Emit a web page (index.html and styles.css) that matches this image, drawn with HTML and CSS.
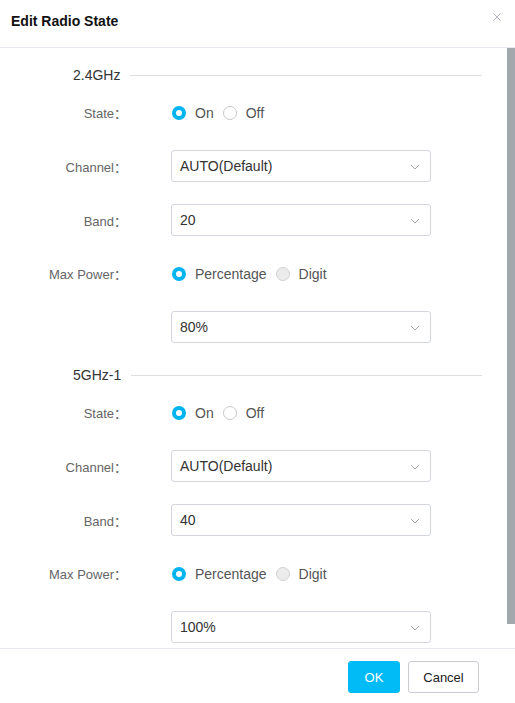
FILE: index.html
```html
<!DOCTYPE html>
<html>
<head>
<meta charset="utf-8">
<link rel="stylesheet" href="styles.css">
</head>
<body>
<div class="dialog">
  <div class="dlg-header">
    <span class="dlg-title">Edit Radio State</span>
    <svg class="close" width="8" height="8" viewBox="0 0 8 8"><path d="M0.5 0.5L7.5 7.5M7.5 0.5L0.5 7.5" stroke="#b4b8c4" stroke-width="1"/></svg>
  </div>
  <div class="dlg-body">
    <div class="content">
      <div class="section"><span class="sec-title">2.4GHz</span><span class="sec-line"></span></div>
      <div class="item radio-item">
        <label class="lbl">State：</label>
        <div class="ctrl">
          <span class="radio checked"></span><span class="rtext">On</span>
          <span class="radio"></span><span class="rtext">Off</span>
        </div>
      </div>
      <div class="item">
        <label class="lbl">Channel：</label>
        <div class="ctrl"><div class="select"><span>AUTO(Default)</span><svg width="10" height="6" viewBox="0 0 10 6"><polyline points="1,1 5,5 9,1" fill="none" stroke="#a8a8b0" stroke-width="1"/></svg></div></div>
      </div>
      <div class="item">
        <label class="lbl">Band：</label>
        <div class="ctrl"><div class="select"><span>20</span><svg width="10" height="6" viewBox="0 0 10 6"><polyline points="1,1 5,5 9,1" fill="none" stroke="#a8a8b0" stroke-width="1"/></svg></div></div>
      </div>
      <div class="item radio-item">
        <label class="lbl">Max Power：</label>
        <div class="ctrl">
          <span class="radio checked"></span><span class="rtext">Percentage</span>
          <span class="radio disabled"></span><span class="rtext">Digit</span>
        </div>
      </div>
      <div class="item">
        <label class="lbl"></label>
        <div class="ctrl"><div class="select"><span>80%</span><svg width="10" height="6" viewBox="0 0 10 6"><polyline points="1,1 5,5 9,1" fill="none" stroke="#a8a8b0" stroke-width="1"/></svg></div></div>
      </div>

      <div class="section"><span class="sec-title">5GHz-1</span><span class="sec-line"></span></div>
      <div class="item radio-item">
        <label class="lbl">State：</label>
        <div class="ctrl">
          <span class="radio checked"></span><span class="rtext">On</span>
          <span class="radio"></span><span class="rtext">Off</span>
        </div>
      </div>
      <div class="item">
        <label class="lbl">Channel：</label>
        <div class="ctrl"><div class="select"><span>AUTO(Default)</span><svg width="10" height="6" viewBox="0 0 10 6"><polyline points="1,1 5,5 9,1" fill="none" stroke="#a8a8b0" stroke-width="1"/></svg></div></div>
      </div>
      <div class="item">
        <label class="lbl">Band：</label>
        <div class="ctrl"><div class="select"><span>40</span><svg width="10" height="6" viewBox="0 0 10 6"><polyline points="1,1 5,5 9,1" fill="none" stroke="#a8a8b0" stroke-width="1"/></svg></div></div>
      </div>
      <div class="item radio-item">
        <label class="lbl">Max Power：</label>
        <div class="ctrl">
          <span class="radio checked"></span><span class="rtext">Percentage</span>
          <span class="radio disabled"></span><span class="rtext">Digit</span>
        </div>
      </div>
      <div class="item">
        <label class="lbl"></label>
        <div class="ctrl"><div class="select"><span>100%</span><svg width="10" height="6" viewBox="0 0 10 6"><polyline points="1,1 5,5 9,1" fill="none" stroke="#a8a8b0" stroke-width="1"/></svg></div></div>
      </div>
    </div>
    <div class="scroll-thumb"></div>
  </div>
  <div class="dlg-footer">
    <button class="btn btn-ok">OK</button>
    <button class="btn btn-cancel">Cancel</button>
  </div>
</div>
</body>
</html>
```
FILE: styles.css
```css
html, body {
  margin: 0;
  padding: 0;
  background: #fff;
}
body {
  font-family: "Liberation Sans", Arial, "Noto Sans CJK SC", sans-serif;
  color: #333;
}
.dialog {
  width: 515px;
  height: 703px;
  display: flex;
  flex-direction: column;
}
.dlg-header {
  height: 47px;
  border-bottom: 1px solid #e9e9f1;
  display: flex;
  align-items: center;
  justify-content: space-between;
  padding: 0 14px 0 11px;
  position: relative;
}
.dlg-title {
  font-size: 14px;
  font-weight: bold;
  color: #111;
  margin-top: -5px;
}
.close {
  position: absolute;
  left: 493px;
  top: 13px;
}
.dlg-body {
  height: 600px;
  overflow: hidden;
  position: relative;
  padding-right: 8px;
}
.scroll-thumb {
  position: absolute;
  right: 0;
  top: -1px;
  width: 8px;
  height: 577px;
  background: #a2a8ae;
}
.content {
  padding: 17px 0 8px 0;
}
.section {
  display: flex;
  align-items: center;
  height: 20px;
  padding-left: 73px;
  padding-right: 25px;
  margin-bottom: 12px;
}
.sec-title {
  font-size: 14px;
  color: #333;
}
.sec-line {
  flex: 1;
  height: 1px;
  background: #dedede;
  margin-left: 10px;
}
.item {
  display: flex;
  align-items: center;
  height: 32px;
  margin-bottom: 22px;
}
.radio-item {
  height: 31px;
}
.lbl {
  width: 127px;
  text-align: right;
  font-size: 13px;
  color: #666;
  flex: none;
}
.ctrl {
  margin-left: 44px;
  display: flex;
  align-items: center;
  font-size: 14px;
}
.radio {
  width: 14px;
  height: 14px;
  box-sizing: border-box;
  border-radius: 50%;
  border: 1px solid #c9c9c9;
  background: #fff;
  flex: none;
  margin-left: 1px;
}
.radio.checked {
  border: 4px solid #00b4f0;
}
.radio.disabled {
  background: #ececec;
  border-color: #d2d2d2;
}
.rtext {
  margin-left: 9px;
  margin-right: 8px;
  color: #555;
}
.select {
  width: 260px;
  height: 32px;
  box-sizing: border-box;
  border: 1px solid #d3d6dd;
  border-radius: 3px;
  display: flex;
  align-items: center;
  justify-content: space-between;
  padding: 0 10px 0 8px;
  color: #333;
  font-size: 14px;
}
.select svg {
  margin-top: 1px;
}
.dlg-footer {
  border-top: 1px solid #e9e9f1;
  padding: 12px 36px 0 0;
  display: flex;
  justify-content: flex-end;
  gap: 8px;
}
.btn {
  height: 32px;
  border-radius: 3px;
  font-family: "Liberation Sans", Arial, sans-serif;
  font-size: 13px;
  padding: 0;
  cursor: pointer;
}
.btn-ok {
  width: 52px;
  background: #00bbf5;
  border: 1px solid #00bbf5;
  color: #fff;
}
.btn-cancel {
  width: 71px;
  background: #fff;
  border: 1px solid #c9ccd2;
  color: #222;
}
```
